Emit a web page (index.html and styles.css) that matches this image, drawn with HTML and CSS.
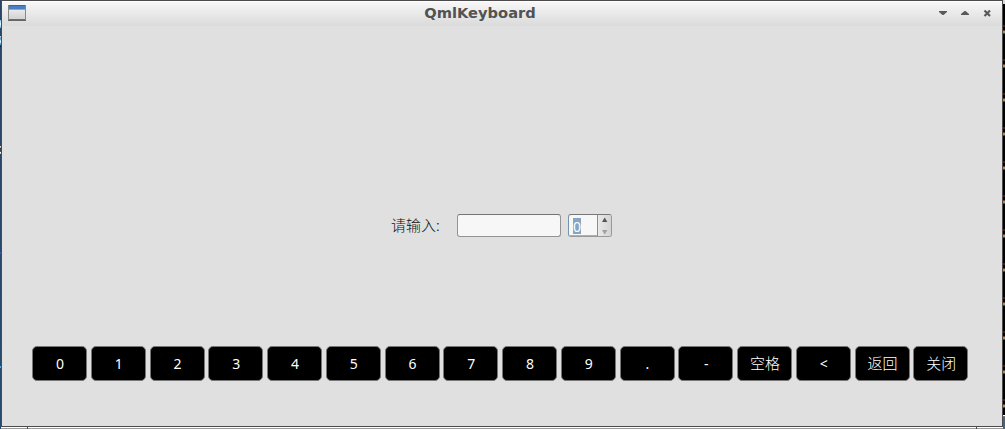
FILE: index.html
```html
<!DOCTYPE html>
<html lang="zh-CN">
<head>
<meta charset="utf-8">
<title>QmlKeyboard</title>
<link rel="stylesheet" href="styles.css">
</head>
<body>
<div class="desktop">
  <div class="edge-left"></div>
  <div class="center">
    <main class="window">
      <header class="titlebar">
        <svg class="app-icon" width="18" height="17" viewBox="0 0 18 17">
          <defs><linearGradient id="face" x1="0" y1="0" x2="0" y2="1"><stop offset="0" stop-color="#f4f4f4"/><stop offset="1" stop-color="#cfcfcf"/></linearGradient></defs>
          <rect x="0.5" y="0.5" width="17" height="15" fill="url(#face)" stroke="#85898e"/>
          <rect x="1" y="0" width="16" height="5" fill="#4a7fc4"/>
          <rect x="1" y="0" width="16" height="1" fill="#3465a4"/>
          <rect x="1" y="4" width="16" height="1" fill="#82acdf"/>
          <rect x="1" y="14" width="16" height="1" fill="#4774ad"/>
          <rect x="0" y="15" width="18" height="1" fill="#666"/>
        </svg>
        <h1 class="title">QmlKeyboard</h1>
        <svg class="controls" width="56" height="12" viewBox="0 0 56 12" fill="#5a5a5a">
          <path d="M1 4h8v1l-3.500 3h-1L1 5z"/>
          <path d="M23 8h8V7l-3.500-3h-1L23 7z"/>
          <path d="M46.500 3.500l5.500 5.500M52 3.500L46.500 9" stroke="#5a5a5a" stroke-width="2.200"/>
        </svg>
      </header>
      <section class="content">
        <div class="form">
          <label class="label" for="entry">请输入:</label>
          <input class="entry" id="entry" type="text">
          <div class="spinbox">
            <div class="value"><span class="selected">0</span></div>
            <div class="steps">
              <svg width="14" height="21" viewBox="0 0 14 21"><path d="M4 7h5.400L6.700 2.500z" fill="#555"/><path d="M4 15h5.400l-2.700 4.500z" fill="#a0a0a0"/></svg>
            </div>
          </div>
        </div>
        <div class="keys">
          <button class="key">0</button><button class="key">1</button><button class="key">2</button><button class="key">3</button>
          <button class="key">4</button><button class="key">5</button><button class="key">6</button><button class="key">7</button>
          <button class="key">8</button><button class="key">9</button><button class="key">.</button><button class="key">-</button>
          <button class="key word">空格</button><button class="key">&lt;</button><button class="key word">返回</button><button class="key word">关闭</button>
        </div>
      </section>
    </main>
    <div class="below"><i class="seg first"></i><i class="seg middle"></i><i class="seg last"></i></div>
  </div>
  <div class="edge-right"></div>
</div>
</body>
</html>
```
FILE: styles.css
```css
* { box-sizing: border-box; }
body { margin: 0; overflow: hidden; background: #e0e0e0; font-family: "Noto Sans", "Noto Sans CJK SC", sans-serif; }
.desktop { display: grid; grid-template-columns: 1px 1002px 2px; height: 429px; }
.edge-left {
  background:
    linear-gradient(#6cc3ef, #fff, #4cb4e9) 0 20px / 1px 8px no-repeat,
    linear-gradient(#f2d3b8, #3b9bd6, #fff, #3b9bd6, #000) 0 36px / 1px 11px no-repeat,
    linear-gradient(#fff, #c9a18b, #000) 0 146px / 1px 3px no-repeat,
    linear-gradient(#000, #fff, #c9a18b) 0 151px / 1px 3px no-repeat,
    linear-gradient(#2e5fa8, #2e5fa8) 0 252px / 1px 2px no-repeat,
    linear-gradient(#48b2ee, #48b2ee) 0 366px / 1px 2px no-repeat,
    linear-gradient(#294566, #2a4a70);
}
.edge-right {
  background:
    linear-gradient(#d8d8d8, #d8d8d8) 0 0 / 2px 4px no-repeat,
    linear-gradient(#fff 0 1px, #777 1px 2px, #486478 2px) 0 415px / 2px 14px no-repeat,
    repeating-linear-gradient(#000 0 25px, #3b200b 25px 27px, #000 27px 30px, #6b3820 30px 31px, #98946b 31px 33px, #6b3820 33px 34px);
}
.center { display: grid; grid-template-rows: 427px 2px; }
.window { border: 1px solid #4d4a4d; background: #e0e0e0; display: flex; flex-direction: column; }
.titlebar { height: 25px; flex: none; display: grid; grid-template-columns: 56px 1fr 56px; padding: 0 8px 2px 6px; align-items: center; background: linear-gradient(#f7f7f7, #dadada); border-top: 1px solid #fff; }
.app-icon { display: block; }
.title { margin: 0; padding-right: 42px; text-align: center; font: bold 14.67px/22px "DejaVu Sans", sans-serif; color: #525252; }
.controls { display: block; }
.content { flex: 1; padding: 188px 0 0 30px; }
.form { display: flex; height: 23px; padding-left: 359px; }
.label { width: 66px; font-size: 15px; line-height: 21px; font-weight: 300; color: #111; font-family: "Noto Sans CJK SC", sans-serif; }
.entry { width: 104px; height: 23px; padding: 0 4px; border: 1px solid #949494; border-top-color: #737373; border-radius: 3px; background: #f7f7f7; outline: 0; }
.spinbox { display: flex; width: 44px; height: 23px; margin-left: 7px; border: 1px solid #999; border-top-color: #777; border-left-color: #7892aa; border-radius: 3px; overflow: hidden; background: #f7f7f7; }
.value { width: 29px; padding: 3px 0 0 4px; border-right: 1px solid #7892aa; box-shadow: inset 0 -1px #9fb3c5; }
.value { flex: none; }
.selected { display: block; width: 8px; height: 16px; background: #86a5c2; color: #fff; font-size: 14px; line-height: 17px; }
.steps { flex: 1; background: linear-gradient(90deg, #e9e9e9, #d2d2d2); }
.steps svg { display: block; }
.keys { display: grid; grid-template-columns: repeat(16, 55px); column-gap: 3.75px; margin-top: 109px; }
.key { width: 55px; height: 35px; padding: 0 0 1px 1px; border: 1px solid #777; border-radius: 5px; background: #000; color: #fff; font: 14px/31px "Noto Sans", sans-serif; text-align: center; }
.word { font: 300 15px/31px "Noto Sans CJK SC", sans-serif; padding-bottom: 2px; }
.below { display: flex; gap: 1px; background: #4d4a4d; }
.seg { height: 2px; background: linear-gradient(#fff 0 1px, #999 1px 2px); }
.first { width: 26px; }
.middle { flex: 1; }
.last { width: 26px; }
```
